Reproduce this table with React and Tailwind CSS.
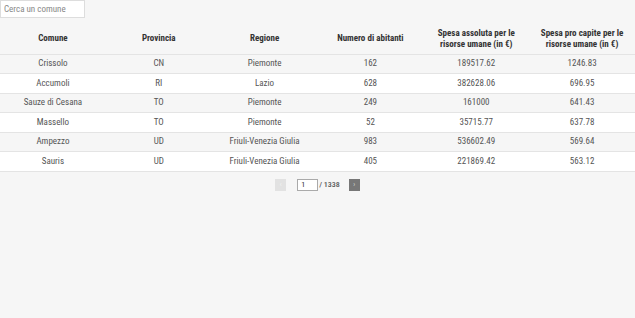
import React, { useState } from "react";

const rows = [
  ["Crissolo", "CN", "Piemonte", "162", "189517.62", "1246.83"],
  ["Accumoli", "RI", "Lazio", "628", "382628.06", "696.95"],
  ["Sauze di Cesana", "TO", "Piemonte", "249", "161000", "641.43"],
  ["Massello", "TO", "Piemonte", "52", "35715.77", "637.78"],
  ["Ampezzo", "UD", "Friuli-Venezia Giulia", "983", "536602.49", "569.64"],
  ["Sauris", "UD", "Friuli-Venezia Giulia", "405", "221869.42", "563.12"],
];

const headers = [
  "Comune",
  "Provincia",
  "Regione",
  "Numero di abitanti",
  "Spesa assoluta per le risorse umane (in €)",
  "Spesa pro capite per le risorse umane (in €)",
];

export default function App() {
  const [query, setQuery] = useState("");
  const [page, setPage] = useState("1");

  return (
    <div className="min-h-[318px] w-full bg-[#f6f6f6] text-[#444] font-['Roboto_Condensed','Liberation_Sans_Narrow',Roboto,sans-serif]">
      <input
        className="block w-[85px] h-[18px] bg-white border border-[#ddd] px-[3px] text-[9px] text-[#555] placeholder:text-[#888] outline-none"
        placeholder="Cerca un comune"
        value={query}
        onChange={(e) => setQuery(e.target.value)}
      />
      <table className="w-full table-fixed border-collapse">
        <thead>
          <tr className="h-[36px] border-b border-[#e4e4e4]">
            {headers.map((h) => (
              <th key={h} className="px-[11px] pt-[6px] text-[9px] leading-[11px] font-bold text-[#333] text-center">
                {h}
              </th>
            ))}
          </tr>
        </thead>
        <tbody>
          {rows.map((r, i) => (
            <tr key={r[0]} className={`h-[19.6px] border-b border-[#e4e4e4] ${i % 2 === 0 ? "bg-[#f6f6f6]" : "bg-white"}`}>
              {r.map((c, j) => (
                <td key={j} className="text-[9px] text-[#555] text-center">
                  {c}
                </td>
              ))}
            </tr>
          ))}
        </tbody>
      </table>
      <div className="flex items-center justify-center pt-[7px]">
        <button className="w-[11px] h-[12px] bg-[#e2e2e2] text-[#f4f4f4] text-[7px] leading-none">‹</button>
        <input
          className="ml-[11px] w-[21px] h-[12px] bg-white border border-[#aaa] px-[3px] text-[8px] text-[#333] outline-none"
          value={page}
          onChange={(e) => setPage(e.target.value)}
        />
        <span className="ml-[1px] text-[8px] font-medium text-[#555]">/ 1338</span>
        <button className="ml-[9px] w-[11px] h-[12px] bg-[#777] text-[#ddd] text-[7px] leading-none">›</button>
      </div>
    </div>
  );
}
